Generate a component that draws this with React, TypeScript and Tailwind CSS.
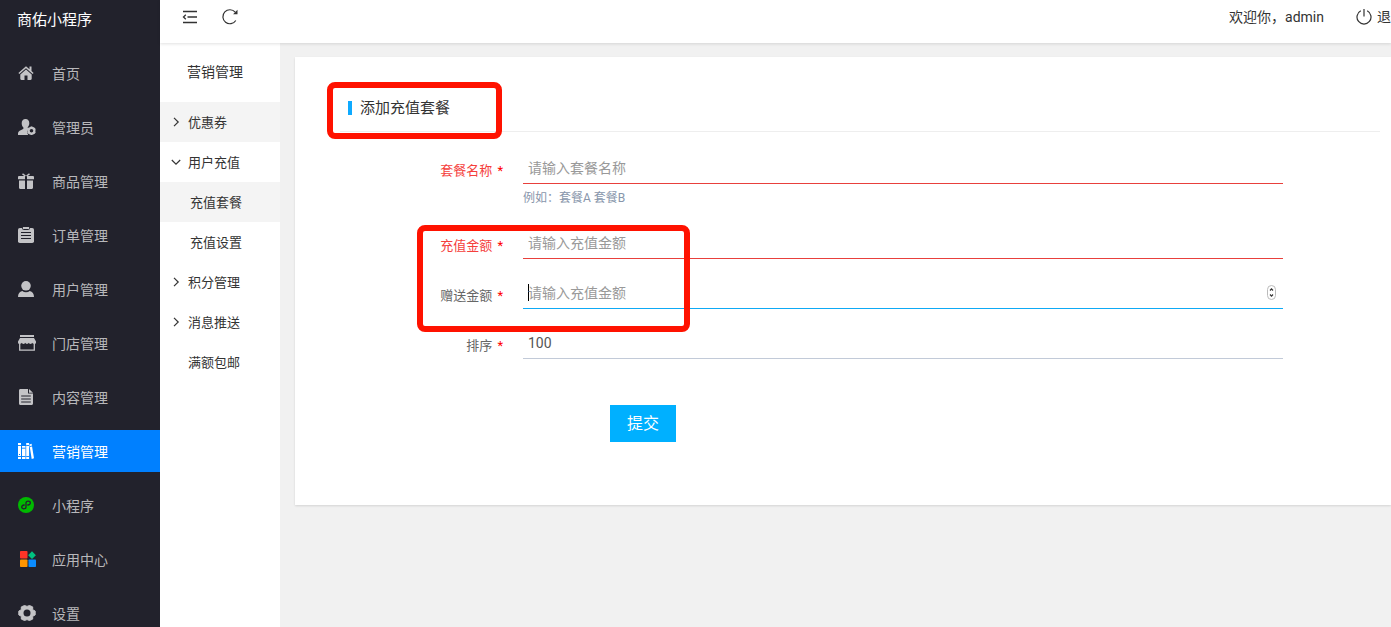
import React, { useState } from 'react';

const GREY = '#c3c3c6';

function HomeIcon() {
  return (
    <svg width="16" height="16" viewBox="0 0 16 16" fill={GREY}>
      <path d="M8 1.2 0.4 8l1 1.1L8 3.2l6.6 5.9 1-1.1-2.1-1.9V1.6h-2v2.7z" />
      <path d="M8 4.4 2.3 9.5v4.3c0 .7.5 1.2 1.2 1.2h3v-4.5h3V15h3c.7 0 1.2-.5 1.2-1.2V9.5z" />
    </svg>
  );
}

function AdminIcon() {
  return (
    <svg width="18" height="16" viewBox="0 0 18 16" fill={GREY}>
      <path d="M7.5 0C5 0 3.7 1.8 3.7 4.2c0 1.7.7 3.3 1.7 4.2v1C5.4 10.6 0 11.2 0 14.5V16h10.2a5 5 0 0 1-.8-2.7c0-1.9 1-3.5 2.5-4.4-.9-.2-2.2 0-2.3-.4v-.2c1-.9 1.7-2.4 1.7-4.1C11.3 1.8 10 0 7.5 0z" />
      <circle cx="13.5" cy="11.8" r="2.9" fill="none" stroke={GREY} strokeWidth="2.2" />
      <path d="M13.5 7.5v1.5M13.5 14.600v1.4M9.8 9.600l1.3.8M15.9 13.200l1.3.8M9.8 14l1.3-.8M15.9 10.400l1.3-.8" stroke={GREY} strokeWidth="1.8" />
    </svg>
  );
}

function GiftIcon() {
  return (
    <svg width="16" height="16" viewBox="0 0 16 16" fill={GREY}>
      <path d="M0 4.2C0 3.5.5 3 1.2 3H7v3.2H0zM9 3h5.8c.7 0 1.2.5 1.2 1.2v2H9zM1 7.5h6V16H2.2C1.5 16 1 15.5 1 14.800zM9 7.5h6v7.300c0 .7-.5 1.2-1.2 1.2H9z" />
      <path d="M4.5.8 7.500 3M11.5.8 8.500 3" stroke={GREY} strokeWidth="1.5" />
    </svg>
  );
}

function OrderIcon() {
  return (
    <svg width="16" height="16" viewBox="0 0 16 16">
      <rect y="1" width="16" height="15" rx="1.8" fill={GREY} />
      <rect x="4.5" y="-0.5" width="7" height="3" rx="1" fill={GREY} stroke="#22222c" />
      <path d="M3 5.500h10M3 8.500h10M3 11.500h10" stroke="#22222c" strokeWidth="1.2" />
    </svg>
  );
}

function UserIcon() {
  return (
    <svg width="16" height="16" viewBox="0 0 16 16" fill={GREY}>
      <circle cx="8" cy="4.8" r="4.8" />
      <path d="M0 16c0-3.500 1.500-5.500 4.300-6 1 .8 2.200 1.200 3.700 1.200s2.700-.4 3.700-1.200c2.800.5 4.300 2.500 4.300 6z" />
    </svg>
  );
}

function StoreIcon() {
  return (
    <svg width="18" height="16" viewBox="0 0 18 16" fill={GREY}>
      <path d="M2 0h14v2H2zM2 3h14l2 3.500v1c0 1-1 1.500-1.900 1.500-1 0-1.500-.6-1.800-1.200C14 8.500 13.400 9 12.500 9S11 8.500 10.700 7.800C10.400 8.500 9.900 9 9 9s-1.400-.5-1.700-1.200C7 8.500 6.400 9 5.500 9S4 8.500 3.700 7.800C3.400 8.500 2.800 9 1.900 9S0 8.500 0 7.500v-1z" />
      <path d="M1.700 8.500v6.700h14.600V8.500" fill="none" stroke={GREY} strokeWidth="1.3" />
    </svg>
  );
}

function DocIcon() {
  return (
    <svg width="16" height="16" viewBox="0 0 16 16" fill={GREY}>
      <path d="M2.500 0H10v4.500h5v10c0 .9-.6 1.500-1.500 1.500h-11C1.600 16 1 15.400 1 14.500v-13C1 .6 1.600 0 2.500 0z" />
      <path d="M11 0l4 3.700h-4z" />
      <path d="M3.200 7h9.600M3.200 10h9.600M3.200 13h9.600" stroke="#22222c" strokeWidth="1" />
    </svg>
  );
}

function BooksIcon() {
  return (
    <svg width="16" height="16" viewBox="0 0 16 16">
      <path fill="#fff" d="M0 0h3v16H0zM4 3h3.500v13H4zM8.200 0h2.900v16H8.200zM11.400 1.400l2.200-.6L16 15.300l-2.300.7z" />
      <path d="M0 2.500h3M4 5.200h3.500M4 13.500h3.500M8.200 2.500h2.900M8.200 13.500h2.900M0 13.500h3M11.800 3.600l2.300-.6" stroke="#0080ff" strokeWidth=".9" />
      <path d="M1 11h1v1H1z" fill="#0080ff" />
    </svg>
  );
}

function MiniProgramIcon() {
  return (
    <svg width="16" height="16" viewBox="0 0 16 16">
      <circle cx="8" cy="8" r="8" fill="#00b900" />
      <path
        d="M9.800 8c1.500-.2 2.500-1 2.500-2.100 0-1-.9-1.700-2.100-1.700S8 5 8 6.100v3.800c0 1.100-1 1.900-2.200 1.900s-2.100-.7-2.100-1.700c0-1.100 1-1.900 2.500-2.100"
        fill="none" stroke="#22222c" strokeWidth="1.3" strokeLinecap="round"
      />
    </svg>
  );
}

function AppsIcon() {
  return (
    <svg width="16" height="16" viewBox="0 0 16 16">
      <rect width="7.5" height="7.5" rx=".8" fill="#ff3427" />
      <path d="M12 .3 15.900 4.200 12 8.100 8.100 4.200z" fill="#00c27f" />
      <rect y="8.5" width="7.5" height="7.5" rx=".8" fill="#ff9500" />
      <rect x="8.5" y="8.5" width="7.5" height="7.5" rx=".8" fill="#0b8cff" />
    </svg>
  );
}

function GearIcon() {
  return (
    <svg width="18" height="16" viewBox="-9 -8 18 16">
      <path
        d="M8.200-1.900V1.900L5.700 3.300V6.100L2.500 7.500 0 6.600-2.500 7.500-5.700 6.100V3.300L-8.200 1.900V-1.900L-5.700-3.300V-6.100L-2.500-7.500 0-6.600 2.500-7.500 5.700-6.100V-3.300z"
        fill={GREY} stroke={GREY} strokeWidth="1" strokeLinejoin="round"
      />
      <circle r="3.5" fill="#22222c" />
    </svg>
  );
}

const MENU = [
  { label: '首页', icon: <HomeIcon /> },
  { label: '管理员', icon: <AdminIcon /> },
  { label: '商品管理', icon: <GiftIcon /> },
  { label: '订单管理', icon: <OrderIcon /> },
  { label: '用户管理', icon: <UserIcon /> },
  { label: '门店管理', icon: <StoreIcon /> },
  { label: '内容管理', icon: <DocIcon /> },
  { label: '营销管理', icon: <BooksIcon />, active: true },
  { label: '小程序', icon: <MiniProgramIcon /> },
  { label: '应用中心', icon: <AppsIcon />, indent: true },
  { label: '设置', icon: <GearIcon /> },
];

const SUBMENU = [
  { label: '优惠券', arrow: 'right', shaded: true },
  { label: '用户充值', arrow: 'down' },
  { label: '充值套餐', child: true, shaded: true },
  { label: '充值设置', child: true },
  { label: '积分管理', arrow: 'right' },
  { label: '消息推送', arrow: 'right' },
  { label: '满额包邮' },
];

function Arrow({ dir }: { dir?: string }) {
  if (!dir) return null;
  return (
    <svg width="10" height="10" viewBox="0 0 10 10" fill="none" stroke="#333" strokeWidth="1.2">
      <path d={dir === 'right' ? 'M3 .8 7.200 5 3 9.200' : 'M.8 3 5 7.200 9.200 3'} />
    </svg>
  );
}

interface FieldProps {
  id: string;
  label: string;
  value: string;
  onChange: (v: string) => void;
  placeholder?: string;
  hint?: string;
  invalid?: boolean;
  focused?: boolean;
}

function Field({ id, label, value, onChange, placeholder, hint, invalid, focused }: FieldProps) {
  const line = invalid ? 'border-[#e8403c]' : focused ? 'border-[#0eaaf5]' : 'border-[#c2cad8]';
  return (
    <div className="flex gap-5">
      <label
        htmlFor={id}
        className={`w-[163px] shrink-0 pt-[9px] text-right text-[13px] leading-5 ${invalid ? 'text-[#f5403c]' : 'text-[#666]'}`}
      >
        {label} <span className="ml-0.5 text-[#f00]">*</span>
      </label>
      <div className="min-w-0 flex-1">
        <div className={`flex h-8 items-center border-b pl-[5px] pr-[7px] ${line}`}>
          {focused && !value && <span className="-mr-px h-[17px] w-px bg-black" />}
          <input
            id={id}
            type="text"
            inputMode={id === 'name' ? 'text' : 'numeric'}
            autoFocus={focused}
            required
            value={value}
            onChange={e => onChange(e.target.value)}
            placeholder={placeholder}
            className="min-w-0 flex-1 bg-transparent text-sm text-[#555] outline-none placeholder:text-[#999]"
          />
          {focused && (
            <svg width="9" height="15" viewBox="0 0 9 15" fill="none">
              <rect x=".5" y=".5" width="8" height="14" rx="4" fill="#fff" stroke="#bbb" />
              <path d="M3 5.500 4.500 3.800 6 5.500M3 9.500l1.500 1.700L6 9.500" stroke="#333" strokeWidth="1.2" />
            </svg>
          )}
        </div>
        {hint && <p className="pt-1 pb-px text-xs leading-5 text-[#8896ab]">{hint}</p>}
      </div>
    </div>
  );
}

export default function App() {
  const [name, setName] = useState('');
  const [amount, setAmount] = useState('');
  const [gift, setGift] = useState('');
  const [sort, setSort] = useState('100');

  return (
    <div className="flex h-screen overflow-hidden bg-[#f1f1f1] font-[Roboto,'Noto_Sans_CJK_SC',sans-serif] text-sm text-[#333]">
      {/* Main navigation */}
      <aside className="w-40 shrink-0 bg-[#22222c]">
        <h1 className="h-10 pl-[17px] text-[15px] leading-10 text-white">商佑小程序</h1>
        <nav className="mt-3 flex flex-col gap-3">
          {MENU.map(m => (
            <a
              key={m.label}
              href="#"
              className={`flex h-[42px] shrink-0 items-center ${m.active ? 'bg-[#0080ff] text-white' : 'text-[#b8b8bb]'}`}
            >
              <span className={`w-[52px] shrink-0 ${m.indent ? 'pl-5' : 'pl-[18px]'}`}>{m.icon}</span>
              <span className="pt-0.5">{m.label}</span>
            </a>
          ))}
        </nav>
      </aside>

      <div className="flex min-w-0 flex-1 flex-col">
        <header className="z-10 flex h-[43px] shrink-0 items-start justify-between bg-white pt-[7px] pl-[22px] shadow-[0_1px_3px_rgba(0,0,0,0.12)]">
          <div className="flex gap-6">
            <button type="button" aria-label="收起菜单" className="flex h-5 w-4 items-center">
              <svg width="16" height="14" viewBox="0 0 16 14" fill="none" stroke="#333" strokeWidth="1.3">
                <path d="M1 1.500h14M5.500 7H15M1 12.500h14M3.800 4.800 1.500 7l2.300 2.200" />
              </svg>
            </button>
            <button type="button" aria-label="刷新" className="flex h-5 w-4 items-center">
              <svg width="16" height="16" viewBox="0 0 16 16" fill="none" stroke="#333" strokeWidth="1.2">
                <path d="M13.800 11.500A7 7 0 1 1 13.200 3.200" />
                <path d="M15.500.8v4.400h-4.400z" fill="#333" stroke="none" />
              </svg>
            </button>
          </div>
          <div className="flex items-center leading-5">
            <span className="mr-8">欢迎你，admin</span>
            <a href="#" className="flex items-center gap-[5px]">
              <svg width="16" height="16" viewBox="0 0 16 16" fill="none" stroke="#333" strokeWidth="1.2">
                <path d="M8 0v7.500M4.800 1.800a7 7 0 1 0 6.400 0" />
              </svg>
              退
            </a>
          </div>
        </header>

        <div className="flex min-h-0 flex-1">
          {/* Section navigation */}
          <aside className="w-[120px] shrink-0 bg-white">
            <h2 className="h-[59px] pl-[27px] text-sm leading-[58px]">营销管理</h2>
            <nav>
              {SUBMENU.map(s => (
                <a
                  key={s.label}
                  href="#"
                  className={`flex h-10 items-center text-[13px] ${s.child ? 'pl-[2px]' : ''} ${s.shaded ? 'bg-[#f4f4f4]' : ''}`}
                >
                  <span className="w-7 shrink-0 pl-[11px]"><Arrow dir={s.arrow} /></span>
                  <span className="pt-0.5">{s.label}</span>
                </a>
              ))}
            </nav>
          </aside>

          <main className="min-w-0 flex-1 pt-[14px] pl-[15px]">
            <section className="relative bg-white pt-[27px] pr-[11px] pb-[63px] pl-[45px] shadow-[0_1px_2px_rgba(0,0,0,0.12)]">
              <div className="flex h-12 items-center gap-2 border-b border-[#eee] pl-2">
                <span className="h-[14px] w-1 bg-[#0eaaff]" />
                <h3 className="pt-0.5 text-[15px]">添加充值套餐</h3>
              </div>

              <form className="mt-5 mr-[97px] flex flex-col gap-[18px]" onSubmit={e => e.preventDefault()}>
                <Field id="name" label="套餐名称" value={name} onChange={setName} placeholder="请输入套餐名称" hint="例如：套餐A 套餐B" invalid />
                <Field id="amount" label="充值金额" value={amount} onChange={setAmount} placeholder="请输入充值金额" invalid />
                <Field id="gift" label="赠送金额" value={gift} onChange={setGift} placeholder="请输入充值金额" focused />
                <Field id="sort" label="排序" value={sort} onChange={setSort} />
                <button type="submit" className="mt-7 ml-[270px] self-start bg-[#00b0ff] px-[17px] text-base leading-[37px] text-white">
                  提交
                </button>
              </form>

              {/* Highlight marks */}
              <div className="pointer-events-none absolute top-[25px] left-8 h-[57px] w-[175px] rounded-lg border-6 border-[#ff1200]" />
              <div className="pointer-events-none absolute top-[168px] left-[122px] h-[107px] w-[273px] rounded-lg border-6 border-[#ff1200]" />
            </section>
          </main>
        </div>
      </div>
    </div>
  );
}
